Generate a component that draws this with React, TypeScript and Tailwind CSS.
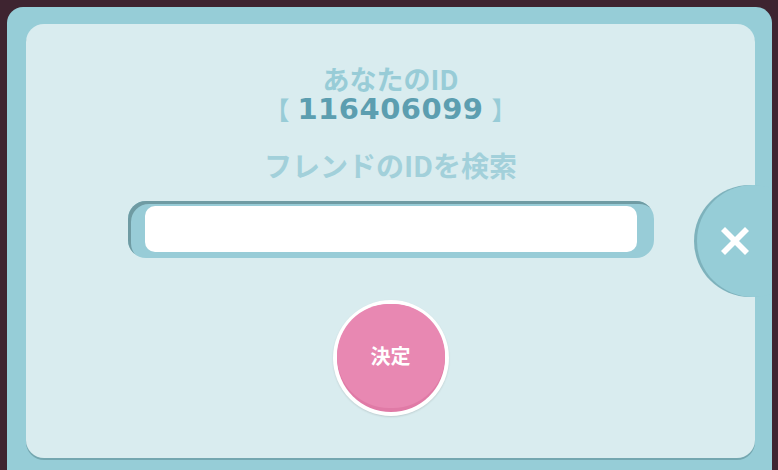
import { X } from 'lucide-react';

const jp = { fontFamily: '"Noto Sans CJK JP", "Noto Sans", sans-serif' };

export default function App() {
  return (
    <div className="w-[778px] h-[470px] bg-[#3e2430] overflow-hidden" style={jp}>
      {/* Outer frame */}
      <div className="relative ml-[7px] mt-[7px] w-[765px] h-[480px] rounded-[16px] bg-[#96cdd7] pl-[19px] pr-[17px] pt-[17px] overflow-hidden">
        {/* Inner panel */}
        <div className="h-[434px] rounded-[18px] bg-[#d9ecef] shadow-[0_2px_0_#74a7b0] flex flex-col items-center">
          <div className="mt-[41px] text-[27px] leading-[28px] font-bold text-[#98ccd7]">あなたのID</div>
          <div className="flex items-center gap-[8px] h-[32px] leading-[32px]">
            <span className="text-[25px] font-bold text-[#98ccd7]">【</span>
            <span
              className="text-[29px] font-bold tracking-[0.5px] text-[#5c9eb0]"
              style={{ fontFamily: '"DejaVu Sans", "Noto Sans", sans-serif' }}
            >
              116406099
            </span>
            <span className="text-[25px] font-bold text-[#98ccd7]">】</span>
          </div>
          <div className="mt-[24px] text-[28px] leading-[32px] font-bold text-[#a2d0da]">フレンドのIDを検索</div>

          {/* Input bar */}
          <div className="mt-[20px] w-[526px] h-[57px] rounded-[18px] bg-[#98ccd7] shadow-[inset_3px_3px_0_#6f9ba3] pl-[17px] pr-[17px] pt-[5px] pb-[6px]">
            <div className="h-full rounded-[10px] bg-white" />
          </div>

          {/* Decide button */}
          <div className="mt-[42px] w-[116px] h-[116px] rounded-full bg-white p-[4px] shadow-[0_1px_2px_rgba(0,0,0,0.12)]">
            <div className="w-full h-full rounded-full bg-[#e07aa6] pb-[4px]">
              <div className="w-full h-full rounded-full bg-[#e888b2] flex items-center justify-center text-white text-[20px] font-bold">
                決定
              </div>
            </div>
          </div>
        </div>

        {/* Close button */}
        <div className="absolute left-[690px] top-[178px] w-[112px] h-[112px] rounded-full bg-[#96cdd7] shadow-[-3px_0_0_#7eb2bc] flex items-center pl-[14px]">
          <X className="w-[48px] h-[48px] text-white" strokeWidth={2.8} strokeLinecap="butt" />
        </div>
      </div>
    </div>
  );
}
